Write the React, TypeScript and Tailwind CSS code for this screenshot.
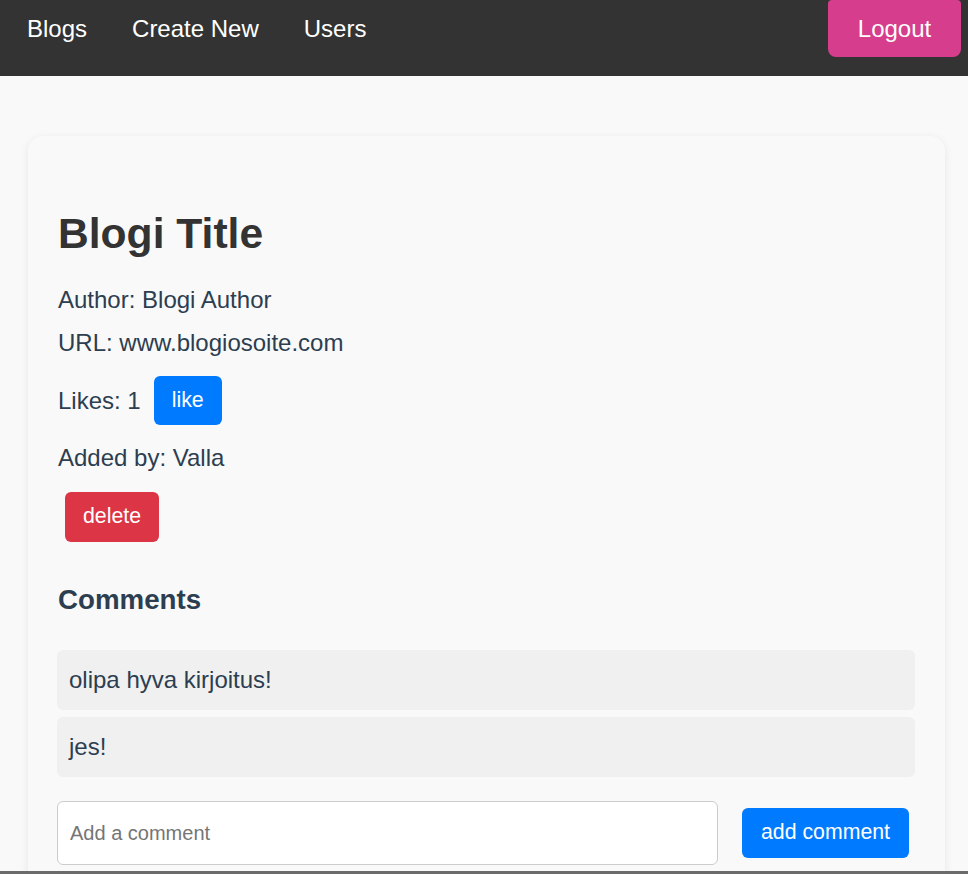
import React from "react";

const comments = ["olipa hyva kirjoitus!", "jes!"];

export default function App() {
  return (
    <div className="min-h-screen bg-[#f9f9f9] font-['Liberation_Sans',Arial,sans-serif]">
      {/* Top navigation */}
      <nav className="flex h-[76px] items-start justify-between bg-[#333333] pl-[27px] pr-[7px]">
        <div className="flex h-[57px] items-center gap-[45px] text-[24px] text-white">
          <a href="#">Blogs</a>
          <a href="#">Create New</a>
          <a href="#">Users</a>
        </div>
        <button className="h-[57px] w-[133px] rounded-b-[8px] rounded-t-[4px] bg-[#d63d8c] text-[24px] text-white">
          Logout
        </button>
      </nav>

      {/* Blog card */}
      <main className="pl-[28px] pr-[23px] pt-[60px]">
        <div className="rounded-[15px] bg-[#f9f9f9] pb-[30px] pl-[29px] pr-[30px] pt-[72px] shadow-[0_2px_8px_rgba(0,0,0,0.08)]">
          <h1 className="pl-px text-[42.6px] font-bold leading-[50px] text-[#333333]">
            Blogi Title
          </h1>

          <div className="pl-px text-[24px] text-[#2c3e50]">
            <p className="mt-[24px] leading-[36px]">Author: Blogi Author</p>
            <p className="mt-[7px] leading-[36px]">URL: www.blogiosoite.com</p>
            <div className="mt-[15px] flex h-[49px] items-center gap-[13px]">
              <span>Likes: 1</span>
              <button className="h-[49px] rounded-[6px] bg-[#007bff] px-[18px] text-[21.3px] text-white">
                like
              </button>
            </div>
            <p className="mt-[15px] leading-[36px]">Added by: Valla</p>
            <button className="ml-[7px] mt-[16px] h-[50px] rounded-[6px] bg-[#dc3545] px-[18px] text-[21.3px] text-white">
              delete
            </button>
          </div>

          <h3 className="mt-[38px] pl-px text-[27.7px] font-bold leading-[40px] text-[#2c3e50]">
            Comments
          </h3>

          <ul className="mt-[30px] flex flex-col gap-[7px]">
            {comments.map((c) => (
              <li
                key={c}
                className="rounded-[6px] bg-[#f0f0f0] px-[12px] py-[12px] text-[24px] leading-[36px] text-[#2c3e50]"
              >
                {c}
              </li>
            ))}
          </ul>

          <div className="mt-[24px] flex items-center">
            <input
              type="text"
              placeholder="Add a comment"
              className="h-[64px] flex-1 rounded-[6px] border border-[#cccccc] bg-white px-[12px] text-[20px] text-[#333] placeholder:text-[#757575] outline-none"
            />
            <button className="ml-[24px] mr-[6px] h-[50px] w-[167px] rounded-[6px] bg-[#007bff] text-[21.3px] text-white">
              add comment
            </button>
          </div>
        </div>
      </main>

      {/* window edge */}
      <div className="fixed bottom-0 left-0 right-0 h-[3px] bg-[#6b6b6b]" />
    </div>
  );
}
